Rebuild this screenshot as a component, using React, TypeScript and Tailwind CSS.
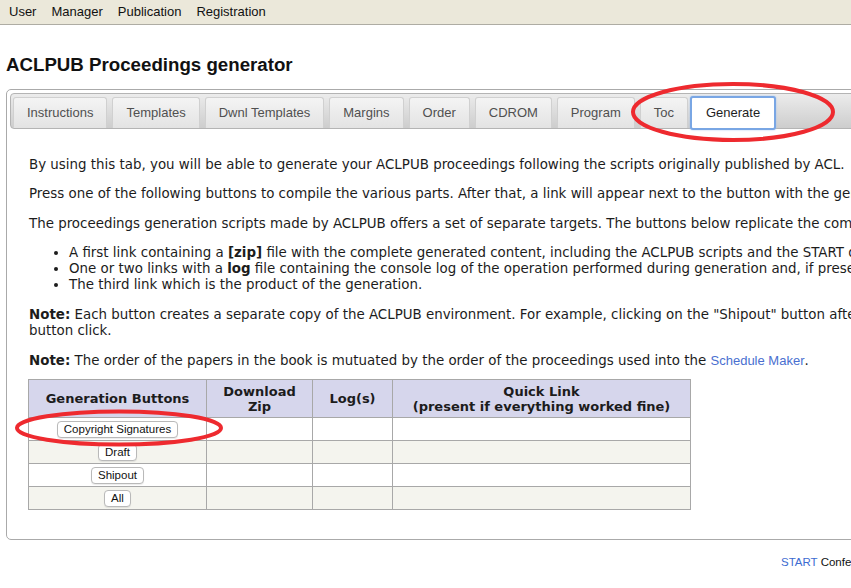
import React from "react";

const tabs = ["Instructions", "Templates", "Dwnl Templates", "Margins", "Order", "CDROM", "Program", "Toc"];

function Btn({ label }: { label: string }) {
  return (
    <button className="h-[17px] px-[6px] rounded-[4px] border border-[#b9b9b9] bg-white text-[11.5px] leading-[15px] text-[#111] font-['Liberation_Sans',Arial,sans-serif] shadow-[0_1px_1px_rgba(0,0,0,0.08)]">
      {label}
    </button>
  );
}

export default function App() {
  const rows = ["Copyright Signatures", "Draft", "Shipout", "All"];
  return (
    <div className="relative w-[851px] h-[588px] overflow-hidden bg-white">
      <div className="w-[1150px]">
        {/* top menu */}
        <div className="h-[25px] bg-[#ebe8da] border-b border-[#aeaca3] flex items-center gap-[15px] pl-[9px] text-[13px] text-[#111] font-['Liberation_Sans',Arial,sans-serif]">
          <span>User</span>
          <span>Manager</span>
          <span>Publication</span>
          <span>Registration</span>
        </div>

        <h1 className="mt-[29px] ml-[6px] text-[18.7px] leading-[22px] font-bold text-[#111] font-['Liberation_Sans',Arial,sans-serif]">
          ACLPUB Proceedings generator
        </h1>

        {/* panel */}
        <div className="mt-[13px] ml-[6px] w-[1100px] border border-[#aaaaaa] rounded-[5px] p-[3px] pb-[29px]">
          <div className="flex items-end gap-[5px] h-[36px] pl-[2px] border border-[#b4b4b4] rounded-[4px] bg-gradient-to-b from-[#ececec] to-[#cdcdcd] font-['Liberation_Sans',Arial,sans-serif] text-[13px]">
            {tabs.map((t) => (
              <div
                key={t}
                className="h-[31px] px-[13px] flex items-center border border-[#d0d0d0] border-b-0 rounded-t-[3px] bg-gradient-to-b from-[#f4f4f4] to-[#e3e3e3] text-[#505050]"
              >
                {t}
              </div>
            ))}
            <div className="h-[34px] mb-[-2px] ml-[-3px] px-[14px] flex items-center border-2 border-[#79a6e4] rounded-[3px] bg-white text-[#1e1e1e] shadow-[0_0_2px_#9fc2f0]">
              Generate
            </div>
          </div>

          <div className="pt-[28px] pl-[19px] text-[13.4px] leading-[16px] text-[#1c1c1c] font-['DejaVu_Sans',Verdana,sans-serif]">
            <p className="whitespace-nowrap">
              By using this tab, you will be able to generate your ACLPUB proceedings following the scripts originally published by ACL.
            </p>
            <p className="mt-[13px] whitespace-nowrap">
              Press one of the following buttons to compile the various parts. After that, a link will appear next to the button with the generated content.
            </p>
            <p className="mt-[14px] whitespace-nowrap">
              The proceedings generation scripts made by ACLPUB offers a set of separate targets. The buttons below replicate the compilation of these targets, producing:
            </p>
            <ul className="mt-[13px] pl-[40px] list-disc whitespace-nowrap">
              <li>
                A first link containing a <b>[zip]</b> file with the complete generated content, including the ACLPUB scripts and the START data.
              </li>
              <li>
                One or two links with a <b>log</b> file containing the console log of the operation performed during generation and, if present, its errors.
              </li>
              <li>The third link which is the product of the generation.</li>
            </ul>
            <p className="mt-[14px] whitespace-nowrap">
              <b>Note:</b> Each button creates a separate copy of the ACLPUB environment. For example, clicking on the "Shipout" button after "Draft" does not reuse the output of the previous
              <br />
              button click.
            </p>
            <p className="mt-[14px] whitespace-nowrap">
              <b>Note:</b> The order of the papers in the book is mutuated by the order of the proceedings used into the{" "}
              <span className="text-[#4a6fd0] text-[13px] font-['Liberation_Sans',Arial,sans-serif]">Schedule Maker</span>.
            </p>

            <table className="mt-[10px] ml-[-1px] border-collapse border border-[#a8a8a8] text-[13px] leading-[15px]">
              <thead>
                <tr className="bg-[#d6d6ec] h-[38px]">
                  <th className="w-[178px] border border-[#a8a8a8] font-bold">Generation Buttons</th>
                  <th className="w-[106px] border border-[#a8a8a8] font-bold">
                    Download
                    <br />
                    Zip
                  </th>
                  <th className="w-[80px] border border-[#a8a8a8] font-bold">Log(s)</th>
                  <th className="w-[298px] border border-[#a8a8a8] font-bold">
                    Quick Link
                    <br />
                    (present if everything worked fine)
                  </th>
                </tr>
              </thead>
              <tbody>
                {rows.map((r, i) => (
                  <tr key={r} className={i % 2 === 1 ? "bg-[#f4f4ee] h-[23px]" : "bg-white h-[23px]"}>
                    <td className="border border-[#a8a8a8] text-center align-middle p-0">
                      <Btn label={r} />
                    </td>
                    <td className="border border-[#a8a8a8]"></td>
                    <td className="border border-[#a8a8a8]"></td>
                    <td className="border border-[#a8a8a8]"></td>
                  </tr>
                ))}
              </tbody>
            </table>
          </div>
        </div>

        <div className="mt-[15px] pl-[781px] text-[11.5px] leading-[14px] whitespace-nowrap font-['Liberation_Sans_Narrow','Liberation_Sans',Arial,sans-serif] text-[#111]">
          <span className="text-[#3d6bd1]">START</span> Conference Manager
        </div>
      </div>

      <svg className="absolute left-0 top-0 pointer-events-none" width="851" height="588">
        <ellipse cx="733" cy="112" rx="100" ry="28" fill="none" stroke="#ee2a2f" strokeWidth="4" />
        <ellipse cx="119" cy="428" rx="102" ry="16.5" fill="none" stroke="#ee2a2f" strokeWidth="4" />
      </svg>
    </div>
  );
}
